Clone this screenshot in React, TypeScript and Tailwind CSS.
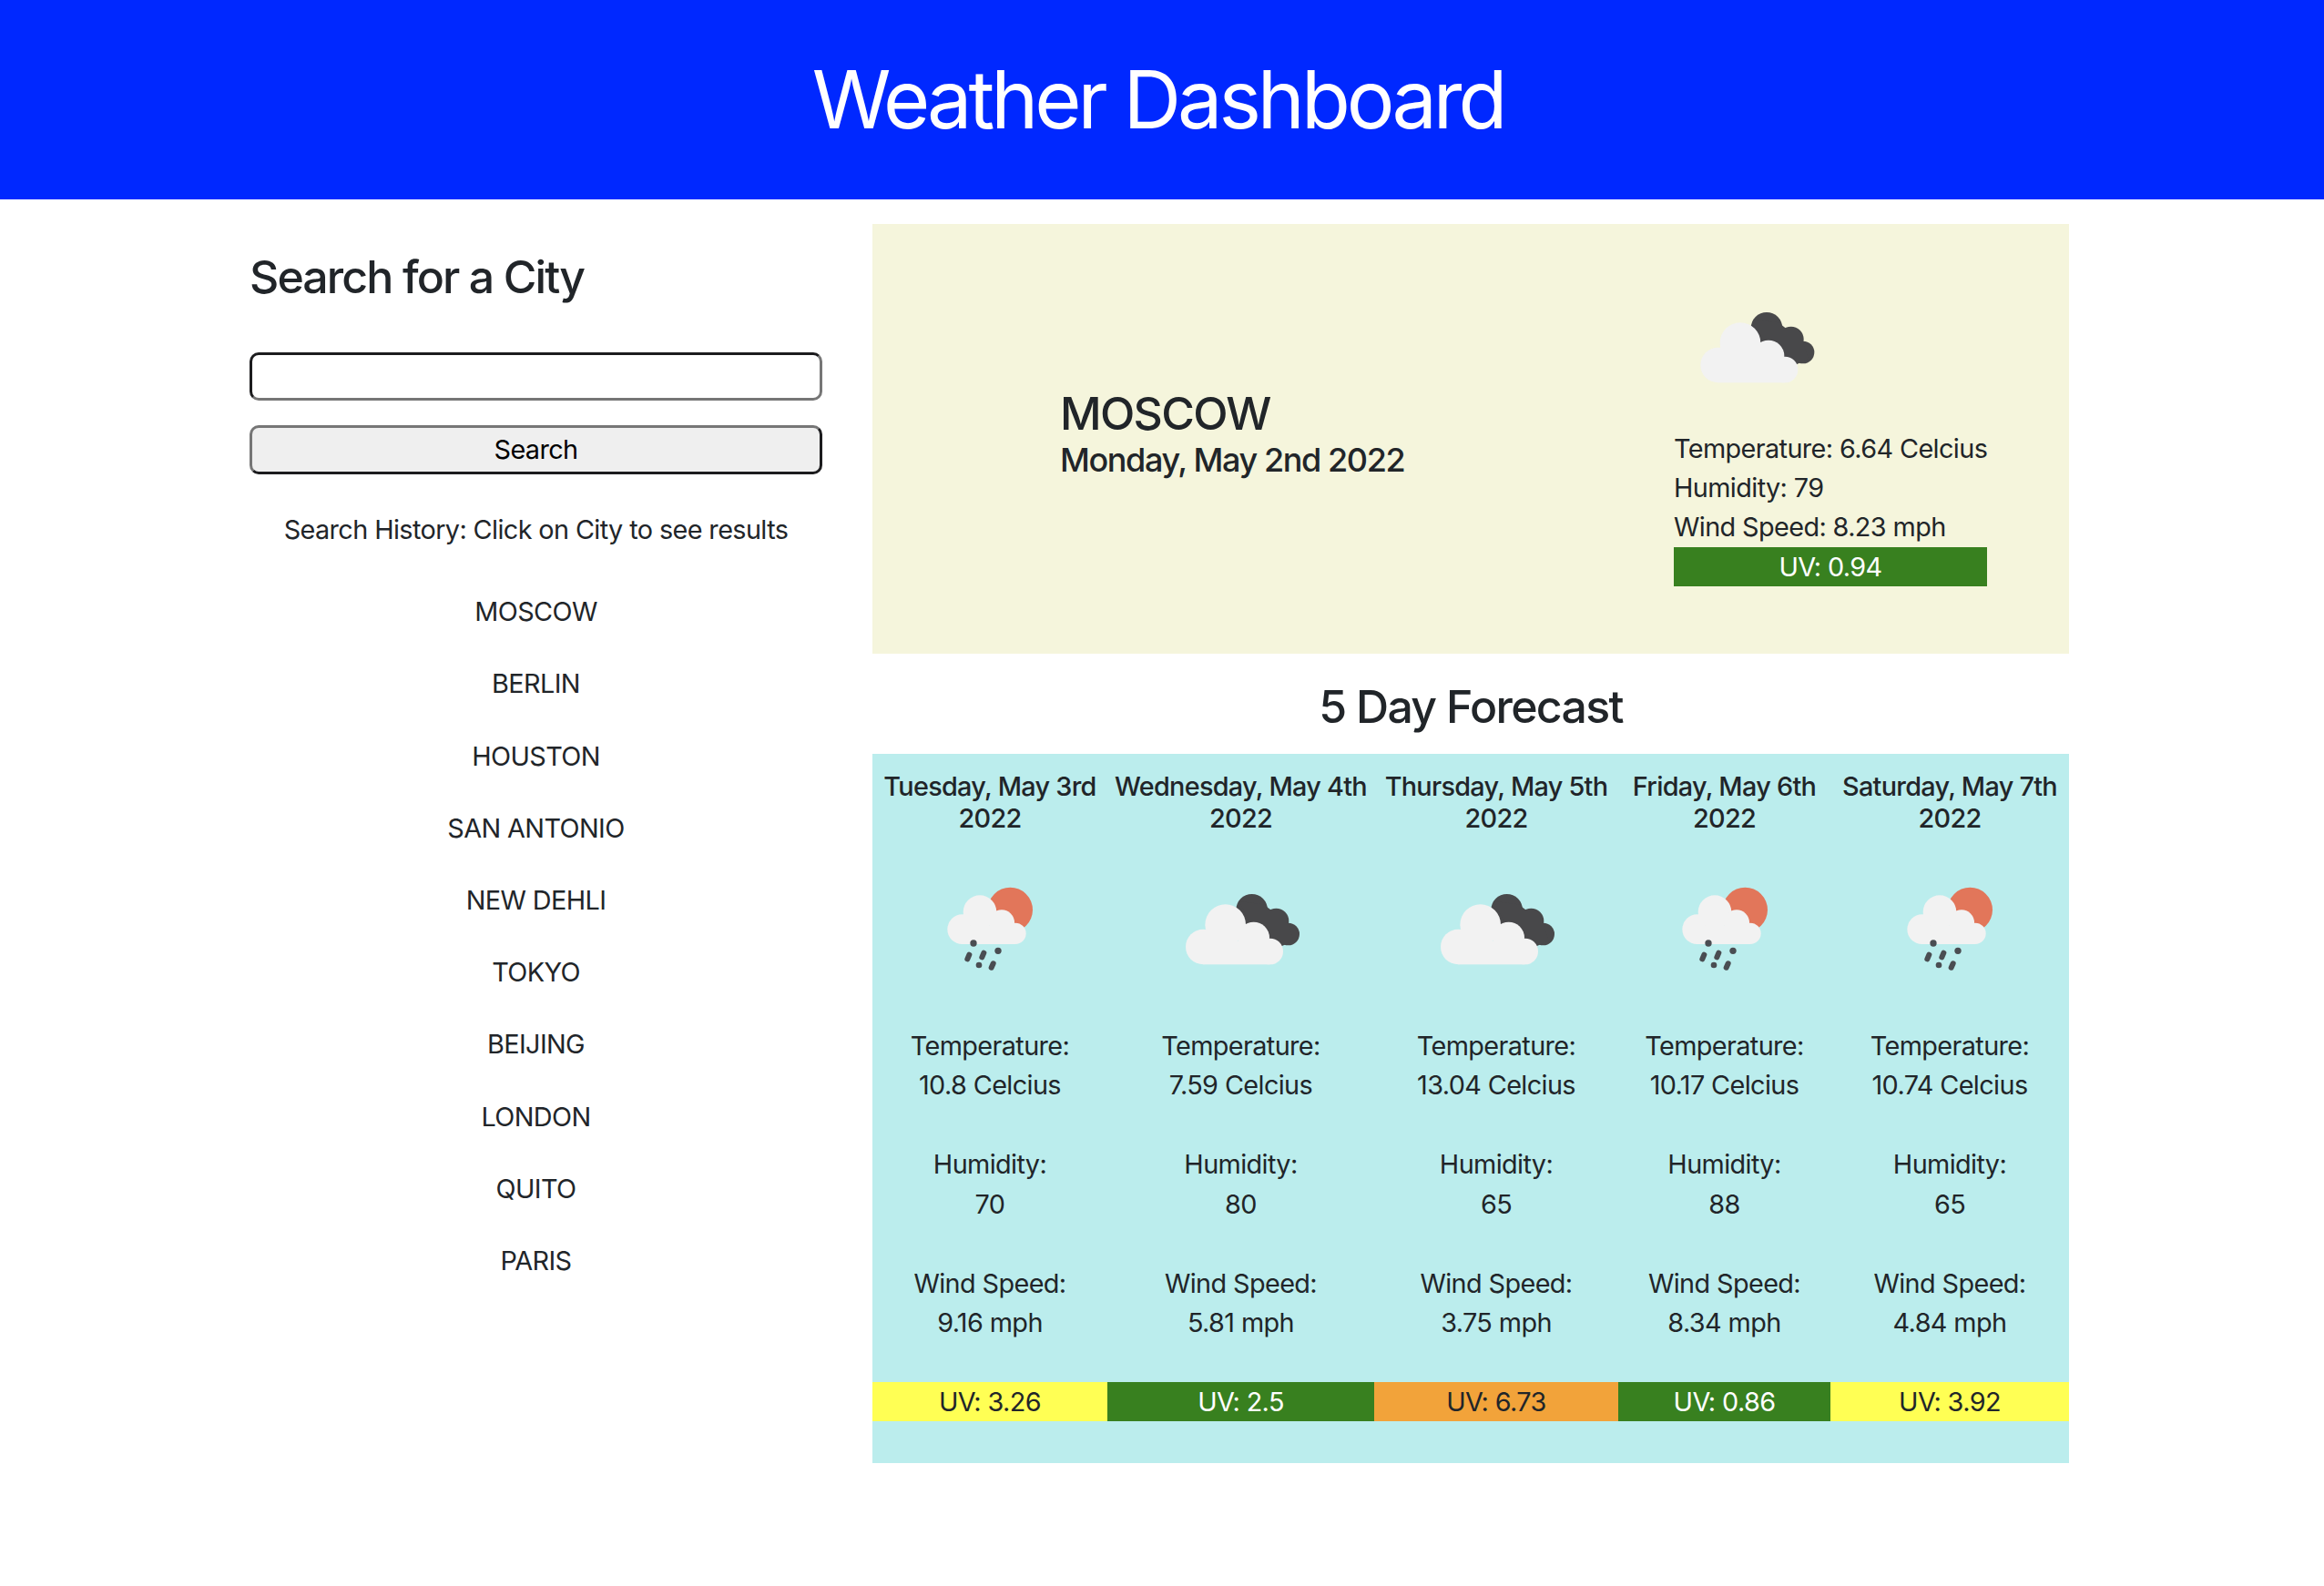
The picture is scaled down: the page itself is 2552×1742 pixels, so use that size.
const font = { fontFamily: 'Inter, "Liberation Sans", sans-serif' };

function CloudIcon({ className = "", vx = 0 }: { className?: string; vx?: number }) {
  return (
    <svg viewBox={`${vx} 0 540 420`} className={`w-[180px] h-[140px] block ${className}`}>
      <g fill="#48484a">
        <circle cx="282" cy="148" r="52" />
        <circle cx="362" cy="185" r="42" />
        <circle cx="402" cy="228" r="37" />
        <polygon points="240,120 320,130 400,190 420,250 380,268 300,240" />
      </g>
      <g fill="#f2f2f2">
        <circle cx="122" cy="270" r="58" />
        <circle cx="195" cy="197" r="67" />
        <circle cx="288" cy="240" r="52" />
        <circle cx="342" cy="285" r="43" />
        <rect x="122" y="250" width="220" height="78" />
      </g>
    </svg>
  );
}

function RainIcon({ vx = 0 }: { vx?: number }) {
  return (
    <svg viewBox={`${vx} 0 540 420`} className="w-[180px] h-[140px] block">
      <circle cx="328" cy="148" r="74" fill="#e2765a" />
      <g fill="#f2f2f2">
        <circle cx="170" cy="212" r="49" />
        <circle cx="228" cy="155" r="55" />
        <circle cx="300" cy="190" r="42" />
        <circle cx="345" cy="226" r="35" />
        <rect x="170" y="200" width="175" height="61" />
      </g>
      <g fill="#4a4d52">
        <circle cx="207" cy="258" r="11" />
        <circle cx="288" cy="283" r="11" />
        <circle cx="225" cy="330" r="10" />
      </g>
      <g stroke="#4a4d52" strokeWidth="18" strokeLinecap="round">
        <line x1="193" y1="296" x2="187" y2="310" />
        <line x1="241" y1="290" x2="235" y2="304" />
        <line x1="272" y1="325" x2="266" y2="338" />
      </g>
    </svg>
  );
}

const cities = ["MOSCOW", "BERLIN", "HOUSTON", "SAN ANTONIO", "NEW DEHLI", "TOKYO", "BEIJING", "LONDON", "QUITO", "PARIS"];

const GREEN = "bg-[#38801f] text-white";
const YELLOW = "bg-[#ffff54] text-[#212529]";
const ORANGE = "bg-[#f2a33a] text-[#212529]";

const days = [
  { d: "Tuesday, May 3rd", rain: true, t: "10.8", h: "70", w: "9.16", uv: "3.26", c: YELLOW, vx: -9, cw: "w-[258px]" },
  { d: "Wednesday, May 4th", rain: false, t: "7.59", h: "80", w: "5.81", uv: "2.5", c: GREEN, vx: -23, cw: "w-[293px]" },
  { d: "Thursday, May 5th", rain: false, t: "13.04", h: "65", w: "3.75", uv: "6.73", c: ORANGE, vx: -23, cw: "w-[268px]" },
  { d: "Friday, May 6th", rain: true, t: "10.17", h: "88", w: "8.34", uv: "0.86", c: GREEN, vx: -9, cw: "w-[233px]" },
  { d: "Saturday, May 7th", rain: true, t: "10.74", h: "65", w: "4.84", uv: "3.92", c: YELLOW, vx: -9, cw: "w-[262px]" },
];

export default function App() {
  return (
    <div style={font} className="min-h-[1742px] bg-white text-[#212529] text-[28.8px] leading-[43.2px] tracking-[-0.6px]">
      <header className="h-[219px] bg-[#0028ff] flex items-center justify-center pr-[9px] pb-[2px]">
        <h1 className="text-white text-[88px] leading-[106px] font-normal tracking-[-4px]">Weather Dashboard</h1>
      </header>

      <main className="flex pt-[27px] pl-[274px]">
        <aside className="w-[629px] mr-[55px]">
          <h2 className="mt-[28px] text-[50px] leading-[60px] font-medium tracking-[-1.9px]">Search for a City</h2>
          <input
            aria-label="City"
            className="block mt-[53px] w-full h-[53px] bg-white rounded-[10px] border-[3px] border-t-[#1c1c1e] border-l-[#1c1c1e] border-r-[#767676] border-b-[#767676]"
          />
          <button className="block mt-[27px] w-full h-[54px] bg-[#efefef] rounded-[10px] border-[3px] border-t-[#767676] border-l-[#767676] border-r-[#1c1c1e] border-b-[#1c1c1e] text-black text-[28.8px] leading-[40px]">
            Search
          </button>
          <p className="mt-[39px] text-center">Search History: Click on City to see results</p>
          <ul className="mt-[47px] flex flex-col gap-[36px] text-center">
            {cities.map((c) => (
              <li key={c}>{c}</li>
            ))}
          </ul>
        </aside>

        <section className="w-[1314px]">
          <div className="h-[472px] bg-[#f5f5dc] flex justify-between pl-[206px] pr-[90px]">
            <div className="pt-[178px]">
              <div className="text-[50px] leading-[60px] font-medium tracking-[-1.7px]">MOSCOW</div>
              <div className="mt-[4px] text-[36px] leading-[35px] font-medium tracking-[-1.4px]">Monday, May 2nd 2022</div>
            </div>
            <div className="w-[344px] pt-[65px]">
              <CloudIcon className="ml-[8px]" />
              <div className="mt-[20px] whitespace-nowrap">Temperature: 6.64 Celcius</div>
              <div>Humidity: 79</div>
              <div>Wind Speed: 8.23 mph</div>
              <div className={`text-center ${GREEN}`}>UV: 0.94</div>
            </div>
          </div>

          <h2 className="h-[110px] pt-[6px] flex items-center justify-center text-[50px] leading-[60px] font-medium tracking-[-1.7px]">5 Day Forecast</h2>

          <div className="h-[779px] bg-[#bbeded] flex text-center">
            {days.map((x) => (
              <div key={x.d} className={`${x.cw} pt-[18px]`}>
                <div className="font-medium leading-[35px] tracking-[-0.7px] whitespace-nowrap">
                  {x.d}
                  <br />
                  2022
                </div>
                <div className="mt-[34px] flex justify-center">
                  {x.rain ? <RainIcon vx={x.vx} /> : <CloudIcon vx={x.vx} />}
                </div>
                <div className="mt-[37px]">Temperature:</div>
                <div>{x.t} Celcius</div>
                <div className="mt-[44px]">Humidity:</div>
                <div>{x.h}</div>
                <div className="mt-[44px]">Wind Speed:</div>
                <div>{x.w} mph</div>
                <div className={`mt-[44px] ${x.c}`}>UV: {x.uv}</div>
              </div>
            ))}
          </div>
        </section>
      </main>
    </div>
  );
}
